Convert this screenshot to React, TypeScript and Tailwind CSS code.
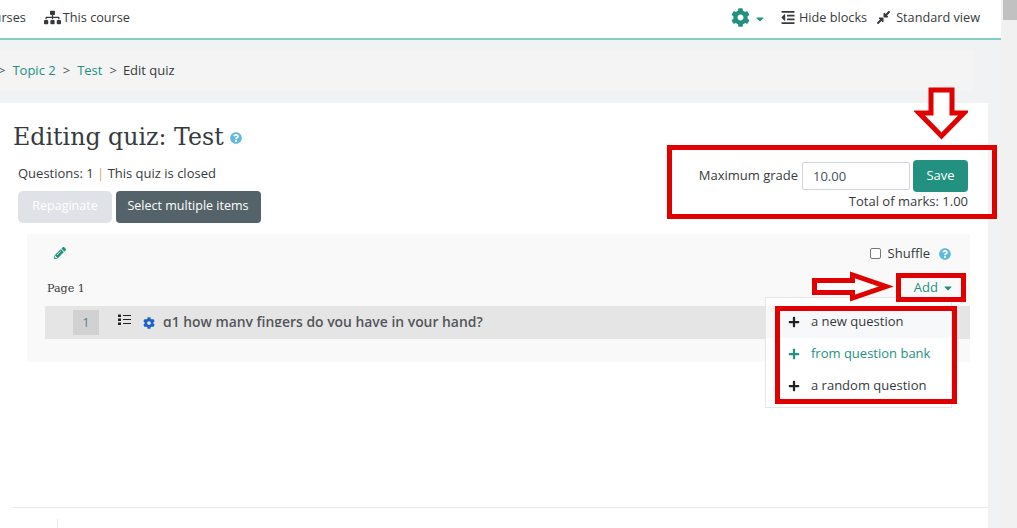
import {
  FaCaretDown,
  FaCog,
  FaCompressAlt,
  FaOutdent,
  FaPencilAlt,
  FaPlus,
  FaQuestionCircle,
  FaSitemap,
} from "react-icons/fa";

const addItems = [
  { label: "a new question", active: false, hover: true },
  { label: "from question bank", active: true, hover: false },
  { label: "a random question", active: false, hover: false },
];

const App = () => {
  return (
    <div className="relative flex h-[528px] w-[1017px] overflow-hidden bg-[#f1f2f4] font-['Open_Sans',sans-serif] text-[13px] text-[#373a3c]">
      <div className="flex w-[1001px] shrink-0 flex-col">
        {/* Top navbar */}
        <div className="flex h-10 shrink-0 items-center justify-between border-b-2 border-[#85cec5] bg-white pb-[3px] text-[12.7px]">
          <div className="flex items-center">
            <span className="-ml-[22px]">Courses</span>
            <FaSitemap className="ml-[18px] h-[17px] w-[17px] text-[#373a3c]" />
            <span className="ml-[2px]">This course</span>
          </div>
          <div className="flex items-center pr-[21px]">
            <FaCog className="h-[19px] w-[19px] text-[#23917f]" />
            <FaCaretDown className="ml-1 mt-[3px] h-3 w-3 text-[#23917f]" />
            <FaOutdent className="ml-[13px] h-[15px] w-[18px] text-[#373a3c]" />
            <span className="ml-[2px]">Hide blocks</span>
            <FaCompressAlt className="ml-[9px] h-[15px] w-[15px] text-[#373a3c]" />
            <span className="ml-[5px]">Standard view</span>
          </div>
        </div>

        {/* Breadcrumb */}
        <div className="mt-[10px] flex h-[41px] w-[974px] shrink-0 items-center gap-[7px] bg-[#f4f4f5] pt-px">
          <span className="-ml-[2px] text-[#555]">&gt;</span>
          <span className="text-[#23917f]">Topic 2</span>
          <span className="text-[#555]">&gt;</span>
          <span className="text-[#23917f]">Test</span>
          <span className="text-[#555]">&gt;</span>
          <span className="-ml-px">Edit quiz</span>
        </div>

        {/* Main card */}
        <div className="mt-3 flex w-[988px] flex-1 flex-col bg-white pl-[13px]">
          <div className="flex justify-between pr-[20px]">
            <div>
              <div className="mt-[18px] flex items-center">
                <h2 className="font-['DejaVu_Serif',serif] text-[23.7px] leading-[32px] text-[#373a3c]">
                  Editing quiz: Test
                </h2>
                <FaQuestionCircle className="ml-[6px] mt-0.5 h-3 w-3 text-[#5fb9dc]" />
              </div>
              <p className="ml-[5px] mt-[11px] text-[13px] leading-[18px]">
                Questions: 1 <span className="text-[#e0a050]">|</span> This quiz is closed
              </p>
              <div className="ml-[5px] mt-[9px] flex gap-1">
                <button className="h-8 w-[94px] rounded-[5px] bg-[#dfe2e7] pb-[2px] text-[12.5px] text-white">
                  Repaginate
                </button>
                <button className="h-8 w-[145px] rounded-[4px] bg-[#546369] pb-[2px] pr-px text-[12.5px] text-white">
                  Select multiple items
                </button>
              </div>
            </div>
            <div className="mt-[57px] flex flex-col items-end">
              <div className="flex items-center">
                <span className="mr-1">Maximum grade</span>
                <div className="flex h-7 w-[108px] items-center rounded-[2px] border border-[#ced4da] pl-[10px] pt-px text-[#495057]">
                  10.00
                </div>
                <button className="ml-[3px] h-8 w-[55px] rounded-[4px] bg-[#23917f] text-white">
                  Save
                </button>
              </div>
              <span className="leading-[19px]">Total of marks: 1.00</span>
            </div>
          </div>

          {/* Quiz contents */}
          <div className="relative ml-[14px] mt-[11px] h-[128px] w-[943px] bg-[#f9f9f9] pl-[18px] pr-[19px] pt-[11px]">
            <div className="flex h-[17px] items-center justify-between">
              <FaPencilAlt className="ml-[9px] mt-[-2px] h-3 w-3 text-[#23917f]" />
              <div className="flex items-center">
                <span className="h-[11px] w-[11px] rounded-[2px] border border-[#767676] bg-white" />
                <span className="ml-[7px]">Shuffle</span>
                <FaQuestionCircle className="ml-[9px] h-3 w-3 text-[#5fb9dc]" />
              </div>
            </div>
            <div className="mt-[18px] flex h-[16px] items-center justify-between">
              <span className="ml-[2px] mt-[2px] font-['DejaVu_Serif',serif] text-[11.1px]">Page 1</span>
              <div className="-mr-[3px] flex items-center text-[#23917f]">
                Add
                <FaCaretDown className="ml-1 h-3 w-3" />
              </div>
            </div>
            <div className="-mr-[19px] mt-[10px] flex h-[33px] items-center bg-[#e5e5e5] pl-7">
              <span className="flex h-[25px] w-[26px] items-center justify-center bg-[#d1d1d1] text-[12px] text-[#4a7f96]">
                1
              </span>
              {/* list handle: dots with thin lines */}
              <svg className="ml-[19px] mt-[-6px] h-3 w-[13px] text-[#222]" viewBox="0 0 13 12">
                <rect x="0" y="0.5" width="3" height="2.5" fill="currentColor" />
                <rect x="0" y="4.5" width="3" height="2.5" fill="currentColor" />
                <rect x="0" y="8.5" width="3" height="2.5" fill="currentColor" />
                <rect x="5" y="1" width="8" height="1" fill="currentColor" />
                <rect x="5" y="5" width="8" height="1" fill="currentColor" />
                <rect x="5" y="9" width="8" height="1" fill="currentColor" />
              </svg>
              <FaCog className="ml-[12px] h-3 w-3 text-[#1d62c9]" />
              {/* the reference crops the descenders of this line */}
              <div className="mb-[5px] ml-[8px] h-[14px] overflow-hidden text-[13.9px] font-semibold leading-[18px] text-[#54565a]">
                q1 how many fingers do you have in your hand?
              </div>
            </div>

            {/* Add dropdown */}
            <div className="absolute left-[738px] top-[63px] z-10 h-[111px] w-[187px] border border-[#e6e6e6] bg-white pt-2">
              {addItems.map((item) => (
                <div
                  key={item.label}
                  className={`flex h-8 items-center pl-[22px] ${item.hover ? "bg-[#f7f8f9]" : ""} ${item.active ? "text-[#23917f]" : "text-[#373a3c]"}`}
                >
                  <FaPlus className={`h-3 w-3 ${item.active ? "text-[#23917f]" : "text-[#222]"}`} />
                  <span className="ml-[11px]">{item.label}</span>
                </div>
              ))}
            </div>
          </div>

          {/* Footer */}
          <div className="mt-auto h-[21px] border-t border-[#e8e8e8]">
            <div className="ml-[44px] mt-[11px] h-2 w-px bg-[#e8e8e8]" />
          </div>
        </div>
      </div>

      {/* Scrollbar */}
      <div className="w-4 shrink-0 bg-[#f1f1f1] pl-[2px]">
        <div className="h-5 bg-[#c1c1c1]" />
      </div>

      {/* Red annotations */}
      <div className="absolute left-[667px] top-[145px] z-20 h-[74px] w-[330px] border-[5px] border-[#e00000]" />
      <div className="absolute left-[896px] top-[273px] z-20 h-[29px] w-[70px] border-[5px] border-[#e00000]" />
      <div className="absolute left-[775px] top-[306px] z-20 h-[98px] w-[182px] border-[5px] border-[#e00000]" />
      <svg className="absolute left-[914px] top-[86px] z-20" width="54" height="55" viewBox="0 0 54 55">
        <path d="M17 4H38V27H50L27.5 50L5 27H17Z" fill="#fff" stroke="#e00000" strokeWidth="5" />
      </svg>
      <svg className="absolute left-[810px] top-[270px] z-20" width="84" height="34" viewBox="0 0 84 34">
        <path d="M4.5 10.5H42.5V5L76 16.5L42.5 28V22.5H4.5Z" fill="#fff" stroke="#e00000" strokeWidth="5" />
      </svg>
    </div>
  );
};

export default App;
